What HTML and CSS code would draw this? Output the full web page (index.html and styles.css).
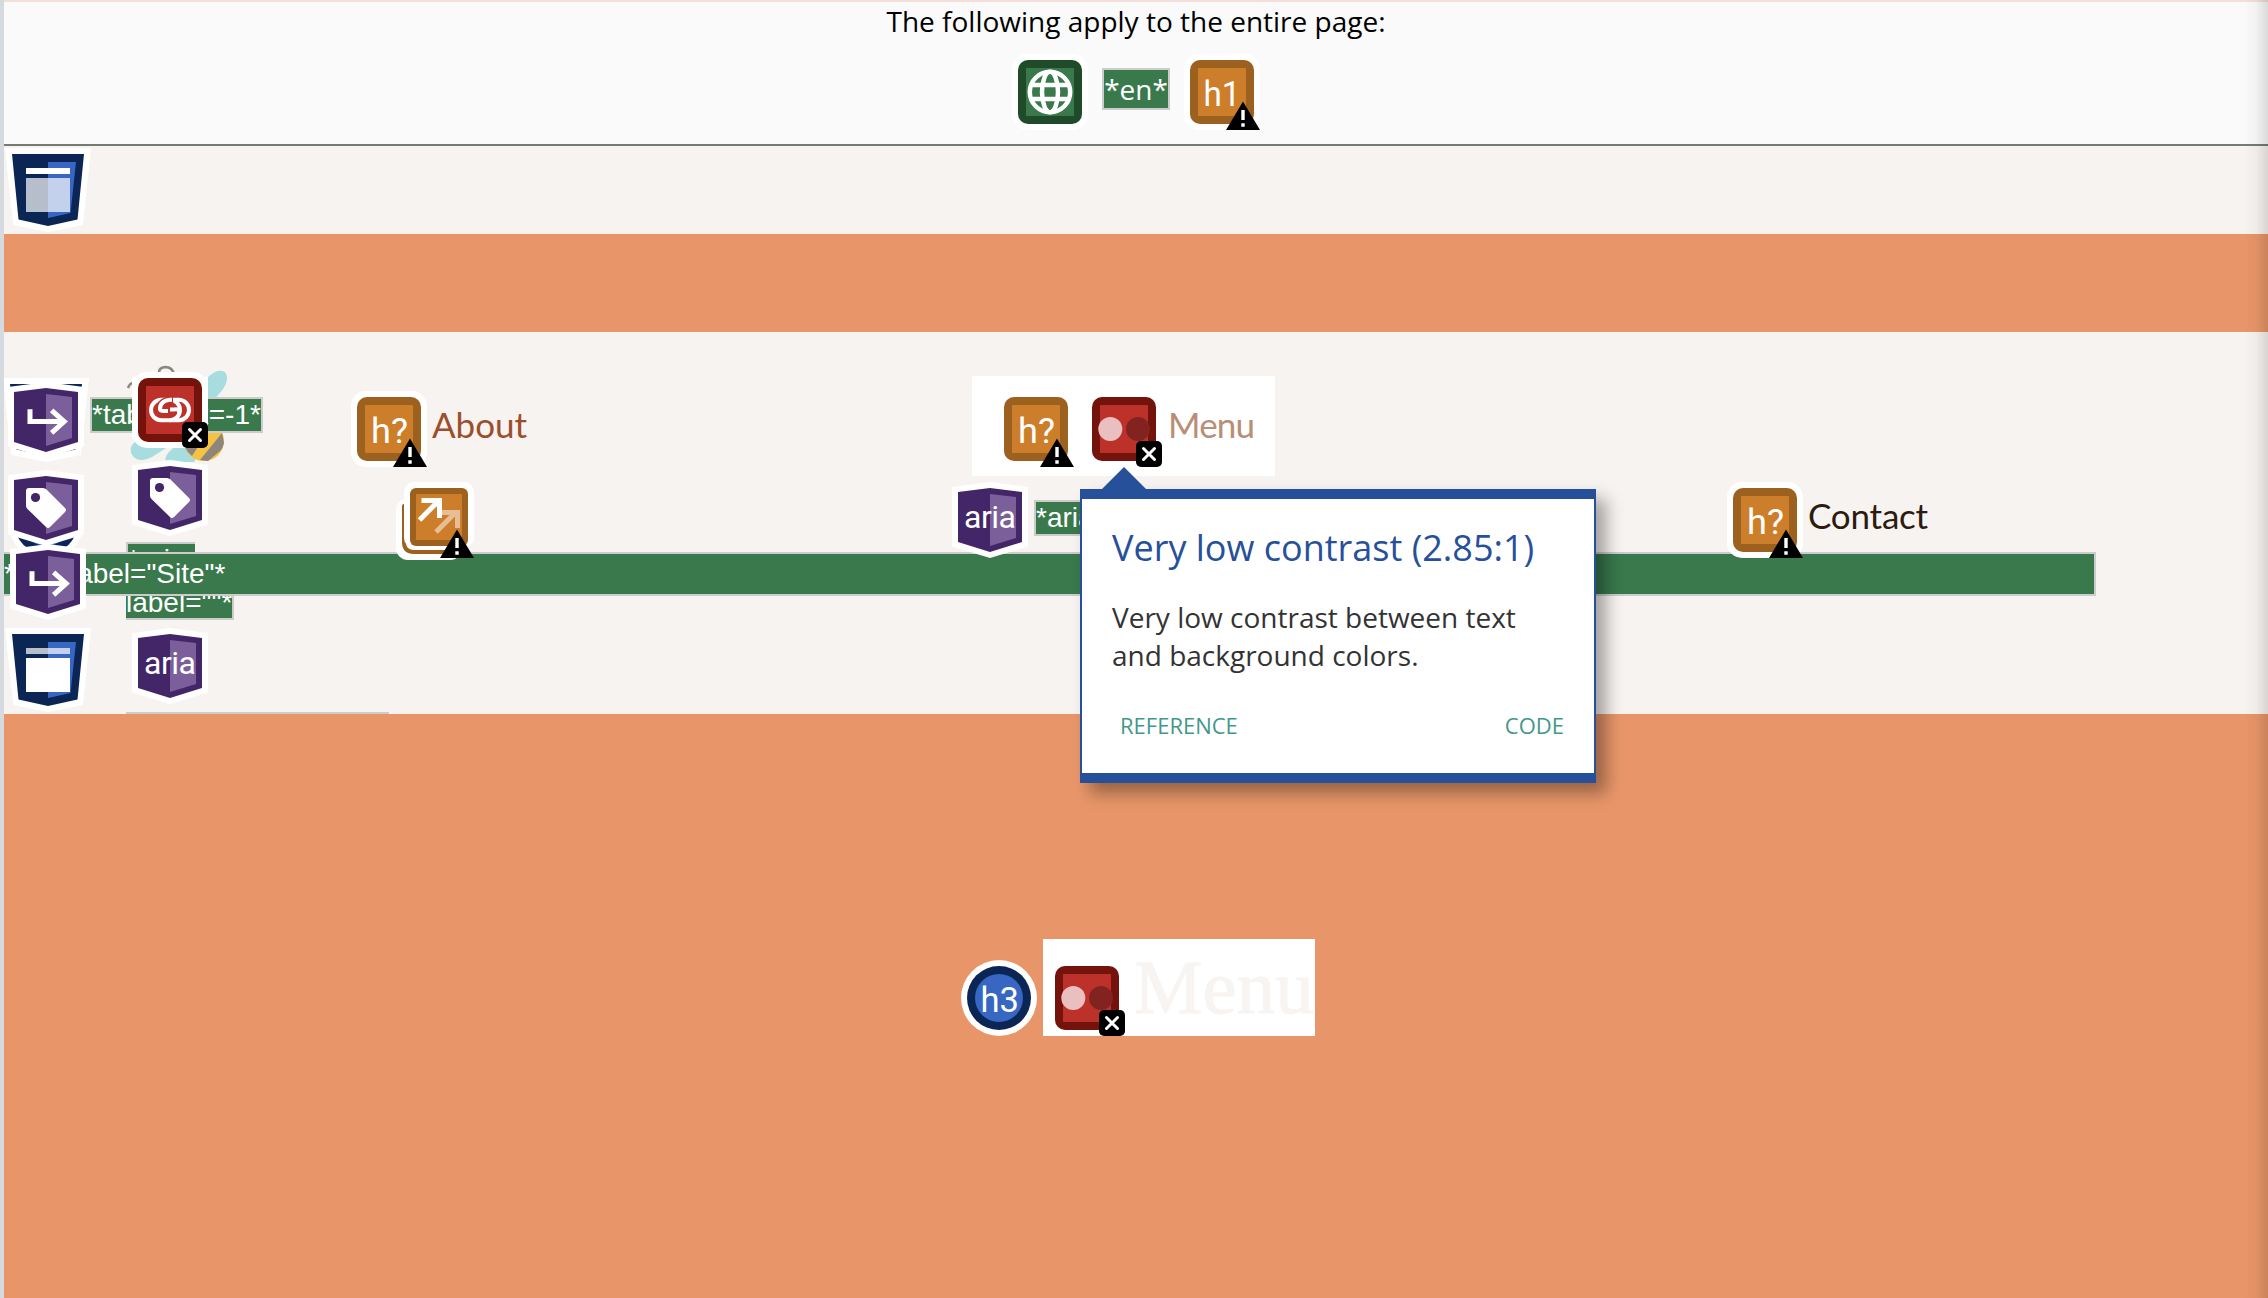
FILE: index.html
```html
<!DOCTYPE html>
<html lang="en">
<head>
<meta charset="utf-8">
<title>Accessibility overlay</title>
<link rel="stylesheet" href="styles.css">
</head>
<body>
<svg class="defs" aria-hidden="true">
  <symbol id="warn" viewBox="0 0 76 76"><path d="M59 47.5 76 76H42z" fill="#000"/><path d="M57.3 56h3.400v10h-3.400zM57.3 69.300h3.400v3.500h-3.400z" fill="#fff"/></symbol>
  <symbol id="cross" viewBox="0 0 76 76"><rect x="50" y="50" width="26" height="26" rx="5"/><path d="M57.500 57.500 68.500 68.500M68.500 57.500 57.500 68.500" stroke="#fff" stroke-width="3" stroke-linecap="round"/></symbol>
  <symbol id="alert-base" viewBox="0 0 76 76"><rect width="76" height="76" rx="15" fill="#fff"/><rect x="6" y="6" width="64" height="64" rx="10" fill="#9c601f"/><rect x="14" y="14" width="48" height="48" rx="1" fill="#cd7e2b"/></symbol>
  <symbol id="error-base" viewBox="0 0 76 76"><rect width="76" height="76" rx="15" fill="#fff"/><rect x="6" y="6" width="64" height="64" rx="10" fill="#74130c"/><rect x="14" y="14" width="48" height="48" rx="1" fill="#bc322a"/></symbol>
  <symbol id="hex" viewBox="0 0 76 76"><path d="M0 5 38 0l38 5v59.500L38 76 0 64.500z" fill="#fff"/><path d="M6 10 38 6l32 4v50L38 70 6 60z" fill="#432667"/><path d="m38 12 26 3v41l-26 8z" fill="#7a5f9a"/></symbol>
  <symbol id="shield" viewBox="0 0 86 84"><path d="M0 0h86l-8 77-35 7-35-7z" fill="#fff"/><path d="M7 6h72l-6.500 65.500L43 78l-29.500-6.500z" fill="#0b2555"/><path d="M43 14h28l-5.500 51L43 70z" fill="#3767c3"/></symbol>
  <symbol id="contrast" viewBox="0 0 76 76"><use href="#error-base"/><circle cx="24.300" cy="38" r="12" fill="#eabfbf"/><circle cx="52" cy="38" r="12" fill="#83231f"/><use href="#cross"/></symbol>
  <symbol id="heading" viewBox="0 0 76 76"><use href="#alert-base"/><text class="glyph" x="20" y="51.700" textLength="37" lengthAdjust="spacingAndGlyphs">h?</text><use href="#warn"/></symbol>
  <symbol id="jump" viewBox="0 0 76 76"><use href="#hex"/><path d="M22 27.300v12.300h34M43.600 28.300l12.600 11.300-12.600 11.300" fill="none" stroke="#fff" stroke-width="5"/></symbol>
  <symbol id="tag" viewBox="0 0 76 76"><use href="#hex"/><path d="M21 18h14q2 0 3.500 1.500L57 38q2 2 0 4L42 57q-2 2-4 0L19.500 39Q18 37.500 18 35.500V21q0-3 3-3z" fill="#fff"/><circle cx="27.500" cy="27.500" r="4.600" fill="#432667"/></symbol>
  <symbol id="aria" viewBox="0 0 76 76"><use href="#hex"/><text class="glyph aria-glyph" x="12" y="46" textLength="52">aria</text></symbol>
</svg>

<header class="summary">
  <p class="summary-text">The following apply to the entire page:</p>
  <div class="summary-icons">
    <svg class="icon" viewBox="0 0 76 76"><rect width="76" height="76" rx="15" fill="#fff"/><rect x="6" y="6" width="64" height="64" rx="10" fill="#1f4b2b"/><rect x="14" y="14" width="48" height="48" rx="1" fill="#39794c"/><g fill="none" stroke="#fff" stroke-width="4.500"><circle cx="38" cy="38" r="20.200"/><ellipse cx="38" cy="38" rx="8" ry="20.200"/><path d="M19 31h38M19 45h38"/></g></svg>
    <span class="note lang">*en*</span>
    <svg class="icon" viewBox="0 0 76 76"><use href="#alert-base"/><text class="glyph" x="19.500" y="51.700" textLength="37" lengthAdjust="spacingAndGlyphs">h1</text><use href="#warn"/></svg>
  </div>
</header>

<section class="landmark"><svg class="shield" viewBox="0 0 86 84"><use href="#shield"/><path d="M21 20h44v6H21z" fill="#fff"/><path d="M21 30h44v34H21z" fill="#fff" opacity=".7"/></svg></section>
<div class="banner"></div>

<nav class="site">
  <div class="row first">
    <div class="item about"><svg class="icon"><use href="#heading"/></svg><a class="link rust">About</a></div>
    <div class="item menu"><svg class="icon"><use href="#heading"/></svg><svg class="icon"><use href="#contrast"/></svg><a class="link faded">Menu</a></div>
  </div>
  <div class="row second">
    <svg class="popup-icon" viewBox="0 0 78 78"><rect y="16" width="66" height="62" rx="12" fill="#fff"/><path d="M8 24v36q0 10 10 10h46" fill="none" stroke="#9c601f" stroke-width="4" stroke-linecap="round"/><rect x="8" width="70" height="66" rx="10" fill="#fff"/><rect x="14" y="6" width="58" height="58" rx="6" fill="#9c601f"/><rect x="20" y="12" width="46" height="46" rx="1" fill="#cd7e2b"/><g fill="none" stroke-width="5"><path d="m40 50 20-20M46 30.500h15.500V46" stroke="#e7bd95"/><path d="m23.500 38 20-20M25.500 18.500h18V36" stroke="#fff"/></g><path d="m61 47.500 17 28.500H44z"/><path d="M59.300 56h3.400v10h-3.400zM59.300 69.300h3.400v3.500h-3.400z" fill="#fff"/></svg>
    <div class="aria-group"><svg class="icon"><use href="#aria"/></svg><span class="note">*aria-label="Menu"*</span></div>
    <div class="item contact"><svg class="icon"><use href="#heading"/></svg><a class="link dark">Contact</a></div>
  </div>
  <div class="site-label">*aria-label="Site"*</div>

  <div class="logo-label"><span class="note">*aria-<wbr>label=""*</span></div>
  <span class="note tabindex">*tabindex=-1*</span>
  <svg class="bee" viewBox="0 0 104 100"><g fill="none" stroke="#8c867e" stroke-width="2.500"><path d="M34 10q-3-7 5-8 8 0 9 8M2 23q2-6 8-5"/></g><path d="M62 46 78 18q5-9 13-12 11-2 10 9-2 8-8 14L76 48z" fill="#a8dde0"/><path d="M40 66 15 73Q1 80 6 90q6 9 20 2l22-14zM66 70 46 84q-9 8-6 13h28l16-26z" fill="#a8dde0"/><circle cx="78" cy="76" r="20" fill="#f6c244"/><path d="m58 79 18-22h12L66 91q-6-5-8-12zM74 95l22-27 2 10q-1 5-4 8L82 96z" fill="#8c867e"/></svg>
  <svg class="pin shield p-land"><use href="#shield"/></svg>
  <svg class="pin icon p-jump1"><use href="#jump"/></svg>
  <svg class="pin icon p-circle" viewBox="0 0 76 76"><circle cx="38" cy="38" r="38" fill="#fff"/><circle cx="38" cy="38" r="32" fill="#0b2555"/><circle cx="38" cy="38" r="24" fill="#3767c3"/></svg>
  <svg class="pin icon p-tag1"><use href="#tag"/></svg>
  <svg class="pin icon p-jump2"><use href="#jump"/></svg>
  <svg class="pin shield p-main" viewBox="0 0 86 84"><use href="#shield"/><path d="M21 20h44v6H21z" fill="#fff" opacity=".7"/><path d="M21 30h44v34H21z" fill="#fff"/></svg>
  <svg class="pin icon p-link" viewBox="0 0 76 76"><path d="M0 5 38 0l38 5v59.500L38 76 0 64.500z" fill="#fff"/><use href="#error-base"/><g fill="none" stroke="#fff" stroke-width="4"><rect x="19" y="27.800" width="29" height="20.400" rx="10.200"/><path d="M38 27.800h8.800a10.200 10.200 0 0 1 0 20.400H38"/><path d="M41 27.800h-3q-10 2-10 8" stroke="#bc322a" stroke-width="7"/><path d="M40 27.800h-2Q28 29 28 37q0 2 4 2h4"/><path d="M38 37.500h4q6-1 5 4" /></g><use href="#cross"/></svg>
  <svg class="pin icon p-tag2"><use href="#tag"/></svg>
  <svg class="pin icon p-aria"><use href="#aria"/></svg>
  <div class="cut-label"></div>

  <aside class="tooltip">
    <h2 class="tip-title">Very low contrast (2.85:1)</h2>
    <p class="tip-text">Very low contrast between text and background colors.</p>
    <div class="tip-actions"><a>REFERENCE</a><a>CODE</a></div>
  </aside>
</nav>

<main class="content">
  <svg class="icon" viewBox="0 0 76 76"><circle cx="38" cy="38" r="38" fill="#fff"/><circle cx="38" cy="38" r="32" fill="#0b2555"/><circle cx="38" cy="38" r="24" fill="#3767c3"/><text class="glyph" x="19.500" y="51.700" textLength="38.500" lengthAdjust="spacingAndGlyphs">h3</text></svg>
  <div class="title-box"><svg class="icon"><use href="#contrast"/></svg><h3 class="title">Menu</h3></div>
</main>
<div class="edge"></div>
</body>
</html>
```
FILE: styles.css
```css
* { box-sizing: border-box; }
body {
  margin: 0;
  height: 1298px;
  overflow: hidden;
  position: relative;
  border-left: 4px solid #d5dade;
  background: #f7f3f0;
  font-family: "Open Sans", sans-serif;
}
p, h2, h3 { margin: 0; font-weight: 400; }
.defs { position: absolute; width: 0; height: 0; }
.icon { display: block; flex: none; width: 76px; height: 76px; }
.shield { display: block; width: 86px; height: 84px; }
.glyph { font-family: Roboto, sans-serif; font-size: 35px; fill: #fff; }
.aria-glyph { font-size: 32px; }
.note {
  font: 28px/32px "Liberation Sans", sans-serif;
  color: #fff;
  background: #39794c;
  border: 2px solid #ccc;
  white-space: nowrap;
}

.summary {
  height: 146px;
  border-top: 2px solid #f3ded9;
  border-bottom: 2px solid #757b73;
  background: #fafafa;
}
.summary-text { height: 52px; font-size: 28px; line-height: 38px; text-align: center; color: #000; }
.summary-icons { display: flex; justify-content: center; gap: 14px; }
.lang { height: 42px; margin-top: 14px; font: 28px/38px "Open Sans", sans-serif; width: 68px; text-align: center; }

.landmark { height: 88px; padding: 2px 0 0 1px; }
.banner { height: 98px; background: #e89669; }

.site { position: relative; height: 382px; padding-top: 44px; }
.row { display: flex; position: relative; z-index: 2; }
.first { height: 100px; }
.second { height: 76px; padding-top: 6px; }
.item { display: flex; }
.about { margin-left: 347px; padding-top: 15px; width: 621px; gap: 5px; }
.menu { width: 303px; height: 100px; padding: 15px 0 0 26px; gap: 12px; background: #fff; }
.menu .link { margin-left: -6px; letter-spacing: -.8px; }
.link { font: 35px/66px Lato, sans-serif; }
.rust { color: #9b4f2d; }
.faded { color: #b98e76; }
.dark { color: #2c1c10; letter-spacing: -.2px; }
.popup-icon { flex: none; width: 78px; height: 78px; margin-left: 392px; }
.aria-group { display: flex; gap: 6px; width: 775px; margin-left: 478px; }
.aria-group .note { height: 36px; margin-top: 18px; }
.contact { gap: 5px; }
.site-label {
  position: relative;
  z-index: 1;
  width: 2092px;
  height: 44px;
  border: 2px solid #ccc;
  border-left: 0;
  background: #39794c;
  color: #fff;
  font: 28px/39px "Liberation Sans", sans-serif;
}

.pin, .bee, .tabindex, .logo-label, .cut-label { position: absolute; }
.logo-label { left: 122px; top: 208px; width: 120px; line-height: 40px; z-index: 0; }
.logo-label .note { line-height: 40px; }
.pin { z-index: 2; }
.tabindex { left: 86px; top: 65px; height: 36px; }
.bee { left: 122px; top: 33px; width: 104px; height: 100px; }
.bee, .tabindex { z-index: 1; }
.bee { z-index: 0; }
.p-land { left: -1px; top: 46px; }
.p-jump1 { left: 4px; top: 50px; }
.p-circle { left: 4px; top: 152px; }
.p-tag1 { left: 4px; top: 138px; }
.p-jump2 { left: 6px; top: 212px; }
.p-main { left: 1px; top: 296px; }
.p-link { left: 128px; top: 40px; }
.p-tag2 { left: 128px; top: 128px; }
.p-aria { left: 128px; top: 296px; }
.cut-label { left: 122px; top: 380px; width: 263px; height: 2px; background: #ccc; }

.tooltip {
  position: absolute;
  z-index: 5;
  left: 1076px;
  top: 157px;
  width: 516px;
  height: 294px;
  padding: 24px 30px;
  border: solid #27509b;
  border-width: 10px 2px;
  background: #fff;
  box-shadow: 10px 10px 16px rgba(0, 0, 0, .35);
}
.tooltip::before {
  content: "";
  position: absolute;
  left: 20px;
  top: -32px;
  border: solid transparent;
  border-width: 0 22px 22px;
  border-bottom-color: #27509b;
}
.tip-title { font-size: 36px; line-height: 50px; color: #27509b; white-space: nowrap; }
.tip-text { margin-top: 25px; font-size: 28px; line-height: 38px; color: #333; }
.tip-actions { display: flex; justify-content: space-between; margin-top: 36px; padding-left: 8px; font-size: 22px; line-height: 30px; color: #43978b; }

.content { display: flex; height: 584px; padding: 225px 0 0 957px; background: #e89669; }
.content > .icon { margin-top: 21px; }
.title-box { display: flex; width: 272px; height: 97px; margin-left: 6px; padding: 21px 0 0 6px; background: #fff; }
.title { margin: -11px 0 0 9px; font: 77px/76px "Liberation Serif", serif; color: #f8f4f2; -webkit-text-stroke: 1px #f8f4f2; }
.edge {
  position: absolute;
  z-index: 6;
  right: 0;
  top: 0;
  width: 24px;
  height: 100%;
  background: linear-gradient(to right, rgba(0, 0, 0, 0), rgba(0, 0, 0, .03) 50%, rgba(0, 0, 0, .13));
}
```
